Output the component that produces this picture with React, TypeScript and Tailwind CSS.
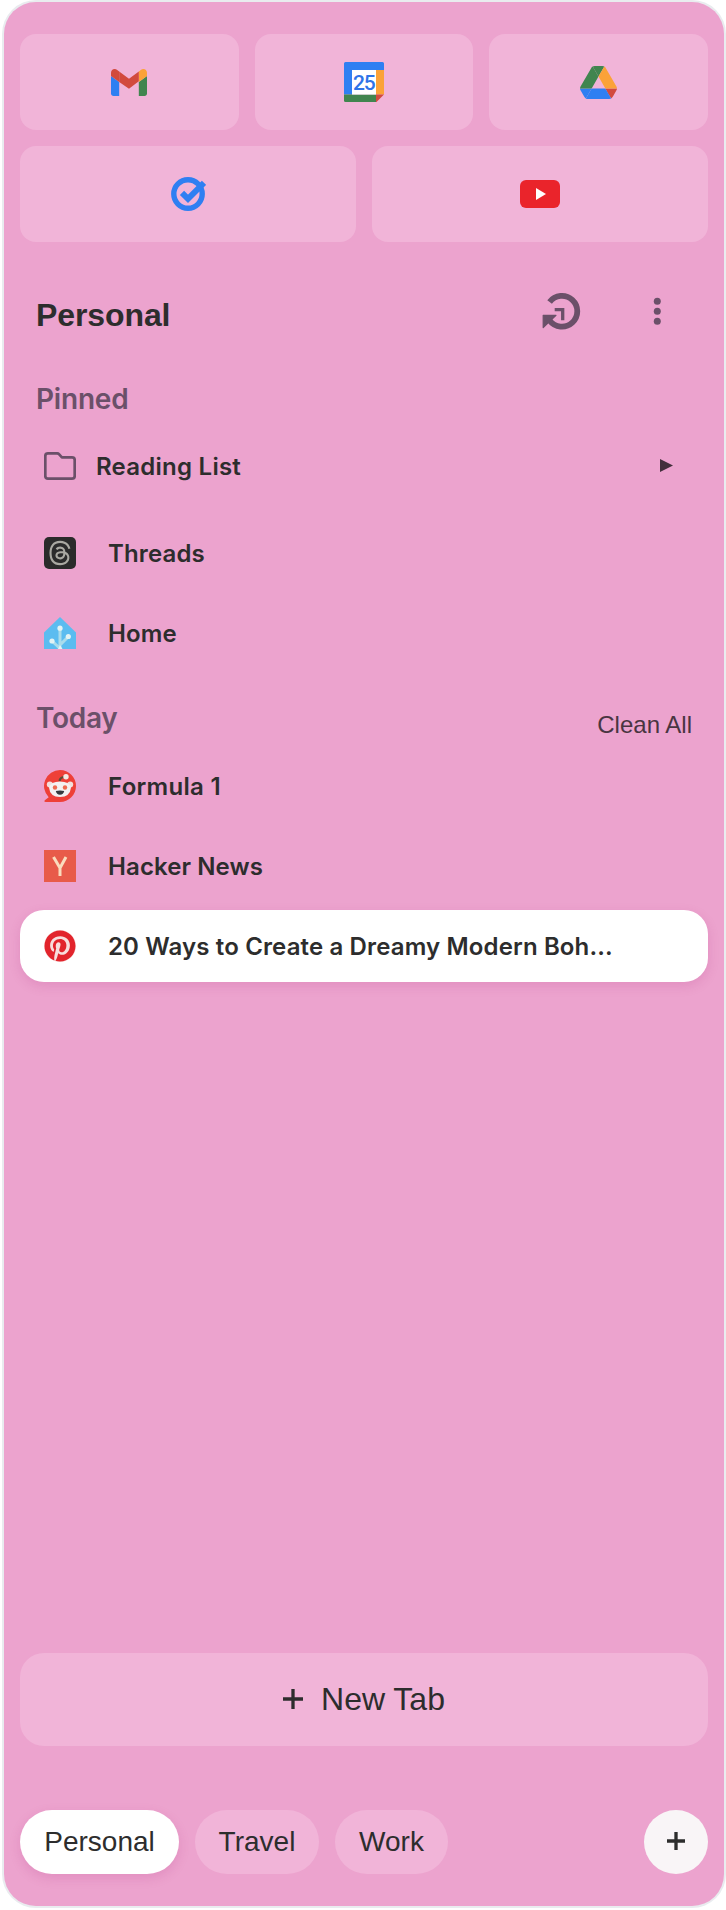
import React from "react";
import { FaThreads, FaPinterest } from "react-icons/fa6";

const GmailIcon = () => (
  <svg viewBox="52 42 88 66" className="h-[27px] w-9">
    <path fill="#2f7ff2" d="M58 108h14V74L52 59v43c0 3.32 2.69 6 6 6" />
    <path fill="#41854f" d="M120 108h14c3.32 0 6-2.69 6-6V59l-20 15" />
    <path fill="#fba238" d="M120 48v26l20-15v-8c0-7.42-8.47-11.65-14.4-7.2" />
    <path fill="#d24a3e" d="M72 74V48l24 18 24-18v24L96 90" />
    <path fill="#d24a3e" d="M52 51v8l20 15V48l-5.6-4.2c-5.94-4.45-14.4-.22-14.4 7.2" />
  </svg>
);

const CalendarIcon = () => (
  <svg viewBox="0 0 40 40" className="size-10">
    <path fill="#2f7ff2" d="M1.500 0h37A1.500 1.500 0 0 1 40 1.500V8H8v24.500H0v-31A1.500 1.500 0 0 1 1.500 0Z" />
    <path fill="#fba238" d="M32 8h8v24.500h-8z" />
    <path fill="#41854f" d="M0 32.500h32V40H1.500A1.500 1.500 0 0 1 0 38.500Z" />
    <path fill="#d24a3e" d="M32 32.500h8L32.500 40H32z" />
    <path fill="#fff" d="M8 8h24v24.500H8z" />
    <text x="19.700" y="27.500" textAnchor="middle" fontFamily="Roboto, sans-serif" fontWeight="500" fontSize="21" letterSpacing="-1.200" fill="#2f74e8">
      25
    </text>
  </svg>
);

const DriveIcon = () => (
  <svg viewBox="0 0 87.3 78" className="h-[33px] w-[37px]">
    <path fill="#2f7ff2" d="m6.600 66.850 3.850 6.650c.8 1.400 1.950 2.500 3.300 3.300l13.750-23.800H0c0 1.550.4 3.100 1.200 4.500z" />
    <path fill="#41854f" d="M43.650 25 29.900 1.200c-1.350.8-2.500 1.900-3.300 3.300L1.200 48.500A9.060 9.060 0 0 0 0 53h27.500z" />
    <path fill="#d24a3e" d="M73.550 76.800c1.350-.8 2.500-1.900 3.300-3.300l1.600-2.750L86.100 57.500c.8-1.400 1.200-2.950 1.200-4.500H59.800l5.850 11.500z" />
    <path fill="#41854f" d="M43.650 25 57.400 1.200C56.050.4 54.500 0 52.900 0H34.400c-1.600 0-3.150.45-4.500 1.200z" />
    <path fill="#2f7ff2" d="M59.800 53H27.500L13.750 76.800c1.350.8 2.900 1.200 4.500 1.200h50.800c1.600 0 3.150-.45 4.500-1.200z" />
    <path fill="#fba238" d="m73.400 26.500-12.700-22c-.8-1.400-1.950-2.500-3.300-3.300L43.650 25 59.800 53h27.450c0-1.550-.4-3.100-1.200-4.500z" />
  </svg>
);

const TasksIcon = () => (
  <svg viewBox="0 0 36 36" className="size-9" fill="none" stroke="#2f7ff2">
    <circle cx="18" cy="18" r="14.200" strokeWidth="5.400" />
    <path d="M12 16.800 18 22.800 34 6.800" strokeWidth="6" />
  </svg>
);

const YouTubeIcon = () => (
  <svg viewBox="0 0 40 28" className="h-7 w-10">
    <rect width="40" height="28" rx="6" fill="#ea242b" />
    <path fill="#fff" d="M16 8v12l10-6z" />
  </svg>
);

const RestoreIcon = () => (
  <svg viewBox="0 0 40 40" className="size-10" fill="none" stroke="#6b5069">
    <path d="M8.600 11A15.400 15.400 0 1 1 8.600 29.600" strokeWidth="5.800" />
    <path d="M2.200 24.300h12.800L2.200 36.500z" fill="#6b5069" strokeWidth="1.200" strokeLinejoin="round" />
    <path d="M13.700 18.700h8V29.300" strokeWidth="3.300" />
  </svg>
);

const MoreIcon = () => (
  <svg viewBox="0 0 40 40" className="size-10" fill="#6b5069">
    <circle cx="20.300" cy="10.300" r="3.500" />
    <circle cx="20.300" cy="20.300" r="3.500" />
    <circle cx="20.300" cy="30.300" r="3.500" />
  </svg>
);

const FolderIcon = () => (
  <svg viewBox="0 0 32 32" className="size-8" fill="none" stroke="#6b5069" strokeWidth="2.700" strokeLinejoin="round">
    <path d="M4 3.400H13.200Q14.400 3.400 15.200 4.300L17.900 7.300H28Q30.700 7.300 30.700 10V26Q30.700 28.700 28 28.700H4Q1.300 28.700 1.300 26V6.100Q1.300 3.400 4 3.400Z" />
  </svg>
);

const ThreadsIcon = () => (
  <span className="flex size-8 items-center justify-center rounded-[5px] bg-[#2b2b2b]">
    <FaThreads className="size-[26px] text-[#aaa9a2]" />
  </span>
);

const HomeIcon = () => (
  <svg viewBox="0 0 32 32" className="size-8">
    <path fill="#5bbcf0" d="M16 0 32 15.500V32H0V15.500z" />
    <g fill="none" stroke="#a9dcec" strokeWidth="3">
      <path d="M16 11v21M8 24l8 7.500M24.500 19.500 16 28" />
    </g>
    <g fill="#e2f3f4">
      <circle cx="16" cy="11.200" r="2.600" />
      <circle cx="8" cy="24" r="2.600" />
      <circle cx="24.300" cy="19.500" r="2.600" />
      <path d="m16 28 2.500 4h-4.500z" />
    </g>
  </svg>
);

const RedditIcon = () => (
  <svg viewBox="0 0 32 32" className="size-8">
    <path fill="#ee4038" d="M16 0a16 16 0 1 1 0 32H1.500c-1 0-1.400-1-.7-1.700L4.700 27.300A16 16 0 0 1 16 0Z" />
    <path d="M15.500 11c.3-2.500 1.600-3.600 4.600-4" fill="none" stroke="#5f4a35" strokeWidth="2.200" />
    <circle cx="22" cy="6.800" r="2.700" fill="#f4e9e4" />
    <circle cx="5.800" cy="14.500" r="3" fill="#f1dfdc" />
    <circle cx="26.200" cy="14.500" r="3" fill="#f1dfdc" />
    <path fill="#f3f1f1" d="M5 17.500Q6.500 11.500 16 11.500T27 17.500Q26 27 16 27T5 17.500Z" />
    <ellipse cx="11" cy="17.500" rx="2.200" ry="2.300" fill="#ee6a50" />
    <ellipse cx="21" cy="17.500" rx="2.200" ry="2.300" fill="#ee6a50" />
    <path fill="#363b3f" d="M11.800 21q4.200-1.200 8.400 0-.7 3.700-4.200 3.700T11.800 21Z" />
  </svg>
);

const HackerNewsIcon = () => (
  <svg viewBox="0 0 32 32" className="size-8">
    <path fill="#e85b49" d="M0 0h32v32H0z" />
    <path d="M9.500 7 16 18 22 7M16 17V26" fill="none" stroke="#fadcbc" strokeWidth="3" />
  </svg>
);

const PinterestIcon = () => (
  <span className="flex size-8 items-center justify-center rounded-full bg-[#f8dedd]">
    <FaPinterest className="size-8 text-[#e2242c]" />
  </span>
);

const Plus = ({ className, width }: { className: string; width: number }) => (
  <svg viewBox="0 0 20 20" className={className} stroke="#2d2d2d" strokeWidth={width}>
    <path d="M10 0v20M0 10h20" />
  </svg>
);

const Tile = ({ children, label }: { children: React.ReactNode; label: string }) => (
  <button aria-label={label} className="flex h-24 flex-1 items-center justify-center rounded-2xl bg-[#f1b4d8]">
    {children}
  </button>
);

const TabRow = ({
  icon,
  title,
  active = false,
  tracking = "tracking-[0.1px]",
}: {
  icon: React.ReactNode;
  title: string;
  active?: boolean;
  tracking?: string;
}) => (
  <li
    className={`flex h-[72px] items-center gap-8 rounded-[24px] px-6 ${
      active ? "bg-white shadow-[0_4px_12px_rgba(170,40,120,0.16)]" : ""
    }`}
  >
    {icon}
    <span className={`truncate pt-0.5 font-[Inter,sans-serif] text-2xl font-semibold ${tracking}`}>{title}</span>
  </li>
);

const Pill = ({ label, active = false, width }: { label: string; active?: boolean; width: string }) => (
  <button
    className={`flex h-16 items-center justify-center rounded-full text-[28px] ${width} ${
      active ? "bg-white shadow-[0_4px_12px_rgba(170,40,120,0.16)]" : "bg-[#f1b4d8]"
    }`}
  >
    {label}
  </button>
);

export default function App() {
  return (
    <div className="h-[1910px] w-[726px] bg-white pt-0.5 pl-1">
      <aside className="flex h-[1904px] w-[720px] flex-col rounded-[32px] bg-[#eca3ce] px-4 pt-8 pb-8 font-['Liberation_Sans',Arial,sans-serif] text-[#2d2d2d] shadow-[0_0_0_2px_#e9ecef]">
        <div className="flex flex-col gap-4">
          <div className="flex gap-4">
            <Tile label="Gmail"><GmailIcon /></Tile>
            <Tile label="Calendar"><CalendarIcon /></Tile>
            <Tile label="Drive"><DriveIcon /></Tile>
          </div>
          <div className="flex gap-4">
            <Tile label="Tasks"><TasksIcon /></Tile>
            <Tile label="YouTube"><YouTubeIcon /></Tile>
          </div>
        </div>

        <header className="mt-[49px] flex h-12 items-center pr-[31px] pl-4">
          <h1 className="flex-1 text-[32px] font-bold tracking-[-0.1px]">Personal</h1>
          <div className="mb-2 flex gap-14">
            <RestoreIcon />
            <MoreIcon />
          </div>
        </header>

        <h2 className="mt-10 h-10 pl-4 font-[Inter,sans-serif] text-[28px] leading-10 font-semibold tracking-[-0.2px] text-[#6b5069]">
          Pinned
        </h2>
        <div className="mt-[11px] flex h-[72px] items-center pr-[35px] pl-6">
          <FolderIcon />
          <span className="ml-5 flex-1 pt-0.5 font-[Inter,sans-serif] text-2xl font-semibold tracking-[0.25px]">Reading List</span>
          <svg viewBox="0 0 13 13" className="mb-px size-[13px]" fill="#432f3c">
            <path d="M0 0v13l13-6.500z" />
          </svg>
        </div>
        <ul className="mt-[15px] flex flex-col gap-2">
          <TabRow icon={<ThreadsIcon />} title="Threads" tracking="tracking-[0.15px]" />
          <TabRow icon={<HomeIcon />} title="Home" />
        </ul>

        <div className="mt-[29px] flex h-10 items-center justify-between px-4">
          <h2 className="font-[Inter,sans-serif] text-[28px] leading-10 font-semibold tracking-[-0.3px] text-[#6b5069]">
            Today
          </h2>
          <button className="pt-3.5 text-2xl leading-8 text-[#493541]">Clean All</button>
        </div>
        <ul className="mt-3 flex flex-col gap-2">
          <TabRow icon={<RedditIcon />} title="Formula 1" tracking="tracking-[0.3px]" />
          <TabRow icon={<HackerNewsIcon />} title="Hacker News" />
          <TabRow icon={<PinterestIcon />} title="20 Ways to Create a Dreamy Modern Boh..." active tracking="tracking-[0.14px]" />
        </ul>

        <button className="mt-auto flex h-[93px] shrink-0 items-center justify-center gap-[18px] rounded-[24px] bg-[#f1b4d8] pb-0.5 text-[32px]">
          <Plus className="size-5" width={3.3} />
          <span>New Tab</span>
        </button>

        <nav className="mt-16 flex items-center gap-4">
          <Pill label="Personal" active width="w-[159px]" />
          <Pill label="Travel" width="w-[124px]" />
          <Pill label="Work" width="w-[113px]" />
          <button aria-label="Add space" className="ml-auto flex size-16 items-center justify-center rounded-full bg-[#f9f5f7]">
            <Plus className="mb-0.5 size-[18px]" width={3.7} />
          </button>
        </nav>
      </aside>
    </div>
  );
}
